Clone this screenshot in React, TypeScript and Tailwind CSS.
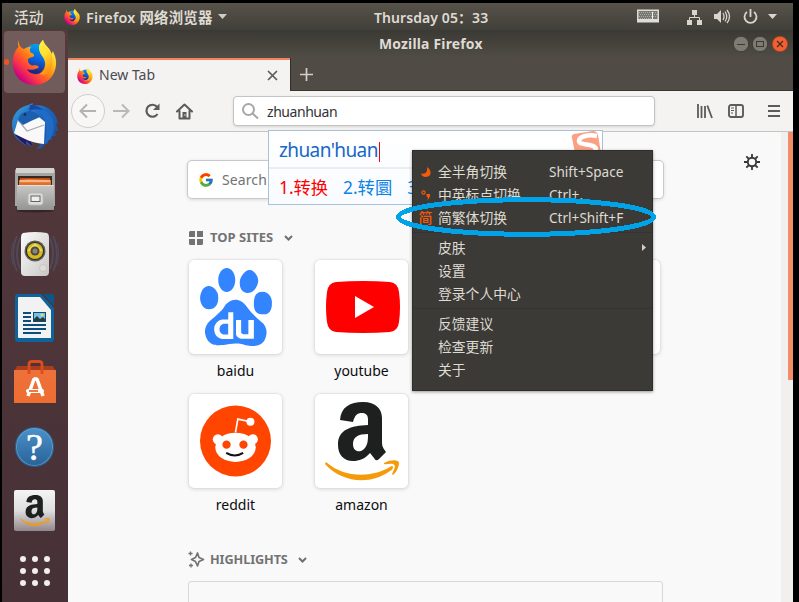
import React from "react";
import { SiBaidu } from "react-icons/si";
import { FcGoogle } from "react-icons/fc";

const UI = "font-['Noto_Sans','Noto_Sans_CJK_SC',sans-serif]";

function FirefoxLogo({ size, id }: { size: number; id: string }) {
  return (
    <svg width={size} height={size} viewBox="0 0 44 45" className="block shrink-0">
      <defs>
        <linearGradient id={id + "f"} x1="0.85" y1="0.1" x2="0.15" y2="0.85">
          <stop offset="0" stopColor="#fff44f" />
          <stop offset="0.28" stopColor="#ffbd1f" />
          <stop offset="0.52" stopColor="#ff7a16" />
          <stop offset="0.76" stopColor="#ff3647" />
          <stop offset="1" stopColor="#c60084" />
        </linearGradient>
        <linearGradient id={id + "b"} x1="0.7" y1="0" x2="0.4" y2="1">
          <stop offset="0" stopColor="#00a8f5" />
          <stop offset="0.5" stopColor="#0a65e0" />
          <stop offset="1" stopColor="#261b70" />
        </linearGradient>
        <linearGradient id={id + "y"} x1="0" y1="0" x2="0.4" y2="1">
          <stop offset="0" stopColor="#fff44f" />
          <stop offset="0.5" stopColor="#ffe22e" />
          <stop offset="1" stopColor="#ff9712" />
        </linearGradient>
      </defs>
      <circle cx="23.5" cy="19" r="15" fill={`url(#${id}b)`} />
      <path
        d="M6 0C5 3 5.400 5 6 7C2 11 0 17 0.300 24C1 37 10 45 22 45C35 45 43.500 35 43.600 23C43.700 17 41 13 40.500 11L39 14C38 8 32 6 30.500 0C25 5 26 10 29 15C34 21 34 29 27 33.500C22 36 16 33 14.500 29C19 31 22 29 26 28C26.500 25 23 25 20 25.500C17 25 15 22 15.500 19C17 17 20 18 21.500 16C22 14 20 13 18 12.500C17 10 17 8 19 6.500C15 7 13 8 11.500 9C8 8 6 4 6 0Z"
        fill={`url(#${id}f)`}
      />
      <path
        d="M30.500 0C25 5 26 10 29 15C35 22 35 31 27 34C37 38 42 26 39 14C38 8 32 6 30.500 0Z"
        fill={`url(#${id}y)`}
        opacity="0.85"
      />
    </svg>
  );
}

function ThunderbirdLogo() {
  return (
    <svg width="48" height="48" viewBox="0 0 48 48">
      <defs>
        <linearGradient id="tb" x1="0" y1="0" x2="1" y2="1">
          <stop offset="0" stopColor="#3aa4df" />
          <stop offset="0.45" stopColor="#1c66bd" />
          <stop offset="1" stopColor="#164e9c" />
        </linearGradient>
      </defs>
      <path d="M1 23C1 11 9 5 17 3L22 1L21 4C33 1 45 8 47 22L45 21L47 29L44 29L45 34L41 34L41 38L37 38L37 42L33 42L31 46L25 47C30 43 31 40 31 38L11 34L23 42L19 41L21 45L15 41L15 44L6 37C3 33 1 29 1 23Z" fill="url(#tb)" />
      <path d="M4 33L10 39L15 43L15 39L21 44L20 39L11 33Z" fill="#2b175f" />
      <path d="M8 17C9 8 17 6 23 8C31 10 34 17 35 24C36 31 35 37 33 43C45 34 46 19 36 10C26 2 10 5 8 17Z" fill="#206bc6" />
      <path d="M3 31L7 18L17 13L28 15L34 20L33 42C22 41 12 37 3 31Z" fill="#f9f9fa" />
      <path d="M7 18L16 29L33 23" fill="none" stroke="#a9a9af" strokeWidth="1.200" />
      <path d="M7 18C9 11 14 9 20 9C24 10 27 12 29 15L20 19L12 23Z" fill="#1d5fae" />
      <circle cx="14" cy="12.500" r="1.400" fill="#12345d" />
      <path d="M19 3C25 3 29 5 32 8C26 7 22 7 18 9" fill="#1748a5" />
    </svg>
  );
}

function FilesLogo() {
  return (
    <svg width="42" height="46" viewBox="0 0 42 46">
      <defs>
        <linearGradient id="fl" x1="0" y1="0" x2="0" y2="1">
          <stop offset="0" stopColor="#c7c7c5" /><stop offset="1" stopColor="#949492" />
        </linearGradient>
      </defs>
      <ellipse cx="21" cy="44" rx="19" ry="1.500" fill="#0005" />
      <path d="M2 2Q2 1 3 1H39Q40 1 41 3V39H1V3Z" fill="#a5a5a2" />
      <path d="M2 1H40L40 6H2Z" fill="#d2d2d0" />
      <path d="M4 9H38V20H4Z" fill="#342a24" />
      <path d="M6 11H36V19H6Z" fill="#c44b12" />
      <path d="M5 13L15 12L37 13V19H5Z" fill="#ed7a2f" />
      <path d="M6 14H36" stroke="#fff1e2" />
      <path d="M5 17H37" stroke="#c65b23" strokeWidth="0.700" />
      <rect x="3" y="18" width="37" height="25" rx="1" fill="url(#fl)" />
      <path d="M3.500 18.500H39.500" stroke="#e0e0df" />
      <rect x="14" y="26" width="15" height="12" rx="2.500" fill="#ddd" stroke="#b8b8b6" />
      <rect x="17" y="29" width="9" height="5.500" fill="#eee" stroke="#636361" />
    </svg>
  );
}

function RhythmboxLogo() {
  return (
    <svg width="52" height="50" viewBox="0 0 52 50">
      <defs>
        <linearGradient id="rb" x1="0" y1="0" x2="1" y2="1">
          <stop offset="0" stopColor="#fafafa" /><stop offset="1" stopColor="#c9c8c5" />
        </linearGradient>
      </defs>
      <g fill="none" stroke="#4d6a90" strokeWidth="1.800" opacity="0.4">
        <path d="M8 7C3 18 3 32 8 42M11 9C7 19 7 30 11 40M44 7C49 18 49 32 44 42M41 9C45 19 45 30 41 40" />
        <path d="M4 14C2 21 2 29 4 36M48 14C50 21 50 29 48 36" strokeWidth="1" />
      </g>
      <path d="M14 4Q26 2 38 4Q40 5 40 8V43Q40 47 36 47H16Q12 47 12 43V8Q12 5 14 4Z" fill="url(#rb)" />
      <circle cx="26" cy="22" r="10.500" fill="#5d5d5a" />
      <circle cx="26" cy="22" r="9" fill="#292925" />
      <circle cx="26" cy="22" r="8" fill="#d8ba1d" />
      <path d="M18 22L34 22L26 14Z" fill="#f1dc56" />
      <circle cx="26" cy="22" r="4.500" fill="#4b4a45" />
      <circle cx="26" cy="22" r="2.500" fill="#88877e" />
      <circle cx="34" cy="39" r="3.500" fill="#deddda" stroke="#c7c6c2" />
    </svg>
  );
}

function WriterLogo() {
  return (
    <svg width="40" height="48" viewBox="0 0 40 48">
      <path d="M3 0H26L39 14V45Q39 48 36 48H3Q0 48 0 45V3Q0 0 3 0Z" fill="#0e639c" />
      <path d="M28 0H38Q39 0 39 1V12Z" fill="#0d5688" />
      <path d="M4 3H25L36 16V44H4Q3 44 3 43V4Q3 3 4 3Z" fill="#f2f2f2" />
      <path d="M8 19H16M8 23H16M8 27H16M8 31H31M8 35H31M8 39H26" stroke="#0c4f7d" strokeWidth="2" />
      <rect x="18" y="18" width="13" height="10" fill="#124a70" />
      <rect x="19" y="19" width="11" height="8" fill="#72c3e8" />
      <path d="M19 27V25L22 22L25 25L28 23L30 25V27Z" fill="#293b37" />
      <circle cx="27" cy="21" r="1.300" fill="#f5e353" />
    </svg>
  );
}

function SoftwareLogo() {
  return (
    <svg width="42" height="44" viewBox="0 0 42 44">
      <defs><linearGradient id="sw" x1="0" y1="0" x2="0" y2="1"><stop offset="0" stopColor="#ed713a" /><stop offset="1" stopColor="#ef6d31" /></linearGradient></defs>
      <path d="M3 6H39L41 10H1Z" fill="#a83e20" />
      <path d="M0 10H42V43H0Z" fill="url(#sw)" />
      <path d="M15 14V4Q15 1.500 18 1.500H25Q28 1.500 28 4V14" fill="none" stroke="#dd4c1a" strokeWidth="2.800" />
      <path d="M14 36L20 19H23L29 36" fill="none" stroke="#fff" strokeWidth="3.500" strokeLinejoin="bevel" />
      <path d="M14 31H28" stroke="#fff" strokeWidth="4" strokeLinecap="round" />
      <path d="M15 31H24" stroke="#ef6b2d" strokeWidth="1.800" />
    </svg>
  );
}

function AmazonLogo({ width, height }: { width: number; height: number }) {
  return (
    <svg width={width} height={height} viewBox="0 0 74 79">
      <path d="M15 18C16 5 25 0 38 0C51 0 57 7 57 16V41C57 45 59 47 61 50L54 57Q51 60 49 56L45 51C40 57 34 59 28 59C19 59 13 53 13 43C13 27 26 24 43 23V18C43 13 41 11 37 11C32 11 30 13 28 20ZM43 32C33 32 28 35 28 42C28 50 35 51 39 47C43 43 43 38 43 32Z" fill="#1e1f1f" />
      <path d="M1 60C19 76 46 76 65 65C69 62 69 67 65 69C44 84 16 80 0 62Z" fill="#f59b0b" />
      <path d="M59 61C67 57 74 58 74 61C74 65 71 71 68 73L67 72C70 66 71 63 68 62C65 61 62 63 59 62Z" fill="#f59b0b" />
    </svg>
  );
}

function RedditLogo() {
  return (
    <svg width="71" height="72" viewBox="60 60 214 216">
      <circle cx="167" cy="168" r="107" fill="#ff4500" />
      <path d="M167 142L174 102L212 110" fill="none" stroke="#fff" strokeWidth="5" />
      <circle cx="212" cy="110" r="12" fill="#fff" />
      <circle cx="114" cy="163" r="15.500" fill="#fff" />
      <circle cx="219" cy="163" r="15.500" fill="#fff" />
      <ellipse cx="167" cy="187" rx="61" ry="44" fill="#fff" />
      <circle cx="140" cy="179" r="12.500" fill="#ff4500" />
      <circle cx="191" cy="179" r="12.500" fill="#ff4500" />
      <path d="M139 204Q165 220 190 204" fill="none" stroke="#111" strokeWidth="6" />
    </svg>
  );
}

function HelpLogo() {
  return (
    <span className="mt-[2px] flex h-[40px] w-[39px] items-center justify-center rounded-full border border-[#286292] bg-gradient-to-b from-[#4c91c9] to-[#276398] shadow-[inset_0_0_0_1px_#70a8d5aa]">
      <span className="font-['Liberation_Serif',serif] text-[38px] leading-[44px] text-white [-webkit-text-stroke:0.500px_white]">?</span>
    </span>
  );
}

function Dock() {
  const items = [
    <FirefoxLogo size={45} id="dock" />,
    <ThunderbirdLogo />,
    <FilesLogo />,
    <RhythmboxLogo />,
    <WriterLogo />,
    <SoftwareLogo />,
    <HelpLogo />,
    <span className="flex h-[41px] w-[41px] items-center justify-center rounded-[2px] bg-gradient-to-b from-[#f5f5f5] via-[#dededf] to-[#92878c]"><AmazonLogo width={36} height={31} /></span>,
    <svg width="30" height="31" viewBox="0 0 30 31" className="-translate-y-[3px]">
      {[3, 15, 27].map((y) => [3, 15, 27].map((x) => <circle key={x + "-" + y} cx={x} cy={y} r="3" fill="#f0eeee" />))}
    </svg>,
  ];
  return (
    <nav className="flex w-[66px] shrink-0 flex-col gap-[2px] bg-gradient-to-b from-[#55393b] to-[#463137] pt-px">
      {items.map((icon, i) => (
        <div key={i} className={"relative ml-[2px] flex h-[62px] w-[61px] shrink-0 items-center justify-center rounded-[4px] " + (i === 0 ? "bg-[#715b5b]" : "")}>
          {i === 0 && <i className="absolute left-0 top-[28px] h-[6px] w-[5px] rounded-full bg-[#ec5524]" />}
          {icon}
        </div>
      ))}
    </nav>
  );
}

function TopBar() {
  return (
    <header className="flex h-[27px] shrink-0 items-center bg-gradient-to-b from-[#57534a] to-[#413f3a] text-[#dfdbd2]">
      <span className="ml-[12px] mt-[2px] w-[50px] text-[14.700px] font-medium">活动</span>
      <span className="w-[22px]"><FirefoxLogo size={16} id="top" /></span>
      <span className="mt-[2px] w-[132px] whitespace-nowrap text-[14.400px] font-semibold tracking-[0.200px]">Firefox 网络浏览器</span>
      <svg width="9" height="5"><path d="M0 0H9L4.500 5Z" fill="#cfccc5" /></svg>
      <span className="ml-[147px] mt-[2px] w-[263px] whitespace-nowrap text-[14px] font-semibold tracking-[0.080px]">Thursday 05：33</span>
      <svg width="22" height="14" viewBox="0 0 22 14" className="-mt-px">
        <rect width="22" height="13" y="0.500" fill="#deddd8" /><rect x="1.500" y="2" width="19" height="8" fill="#777772" />
        <path d="M2 3.500H20M3 5.500H20M2 7.500H20M3 9.500H14" stroke="#b9b9b4" strokeWidth="0.800" strokeDasharray="1 1" /><path d="M15.500 3V10" stroke="#f4f4ef" />
      </svg>
      <svg className="ml-[28px]" width="15" height="16"><path d="M5 1H10V6H5ZM0 11H5V16H0ZM10 11H15V16H10Z" fill="#d8d5ce" /><path d="M7.500 6V9M2.500 11V8.500H12.500V11" fill="none" stroke="#d8d5ce" /></svg>
      <svg className="ml-[12px]" width="17" height="15" viewBox="0 0 17 15"><path d="M0 5H3L7 1V14L3 10H0Z" fill="#d8d5ce" /><path d="M9 4Q11 7.500 9 11M11 2.500Q14.500 7.500 11 12.500M13 1Q18 7.500 13 14" fill="none" stroke="#d8d5ce" strokeWidth="1.300" /></svg>
      <svg className="ml-[12px]" width="15" height="16" viewBox="0 0 15 16"><path d="M4 3A6 6 0 1 0 11 3M7.500 0V8" fill="none" stroke="#d8d5ce" strokeWidth="1.800" /></svg>
      <svg className="ml-[10px]" width="9" height="5"><path d="M0 0H9L4.500 5Z" fill="#d8d5ce" /></svg>
    </header>
  );
}

function WindowControl({ kind }: { kind: string }) {
  const close = kind === "close";
  return (
    <svg width="18" height="18" viewBox="0 0 18 18">
      <circle cx="9" cy="9" r="7.700" fill={close ? "#ed6132" : "#7d7b72"} stroke={close ? "#9e3b20" : "#373530"} strokeWidth="0.800" />
      {kind === "min" && <path d="M5 9.500H13" stroke="#3b3934" />}
      {kind === "max" && <rect x="5.500" y="6.500" width="7" height="5" fill="none" stroke="#3b3934" />}
      {close && <path d="M6 6L12 12M12 6L6 12" stroke="#4d271c" strokeWidth="1.200" />}
    </svg>
  );
}

function WindowHeader() {
  return (
    <div className="h-[61px] shrink-0 bg-gradient-to-b from-[#3b3934] via-[#504c45] via-45% to-[#504c45]">
      <div className="flex h-[28px] items-center">
        <span className="ml-[311px] w-[353px] text-[13.900px] font-bold leading-none tracking-[0.200px] text-[#dfdbd2]">Mozilla Firefox</span>
        <WindowControl kind="min" />
        <span className="ml-px flex gap-[2px]"><WindowControl kind="max" /><WindowControl kind="close" /></span>
      </div>
      <div className="flex h-[33px] border-b border-[#393630]">
        <div className="mb-[-1px] flex w-[222px] items-center border-t-2 border-[#f0845c] bg-[#f4f3f2] pl-[9px]">
          <FirefoxLogo size={16} id="tab" />
          <span className="ml-[6px] mt-[-2px] w-[168px] text-[14px] text-[#4a4a4f]">New Tab</span>
          <svg width="11" height="11"><path d="M1 1L10 10M10 1L1 10" stroke="#5b5b5b" strokeWidth="1.700" /></svg>
        </div>
        <div className="flex items-center border-l border-[#302e29] pl-[9px]"><svg width="13" height="13"><path d="M0 6.500H13M6.500 0V13" stroke="#d4d0c7" strokeWidth="1.700" /></svg></div>
      </div>
    </div>
  );
}

function Toolbar() {
  return (
    <div className="flex h-[41px] shrink-0 items-center border-b border-[#c5c4c3] bg-[#f4f3f2]">
      <span className="ml-[3px] flex h-[34px] w-[34px] items-center justify-center rounded-full border border-[#cfcecd] bg-[#f8f7f6]">
        <svg width="18" height="16"><path d="M17 8H2M8 1.500L1.500 8L8 14.500" fill="none" stroke="#b4b3b2" strokeWidth="2" /></svg>
      </span>
      <svg className="ml-[8px]" width="17" height="16"><path d="M0 8H15M9 1.500L15.500 8L9 14.500" fill="none" stroke="#b9b8b7" strokeWidth="2" /></svg>
      <svg className="ml-[14px]" width="18" height="16" viewBox="0 0 18 16"><path d="M13 3.800A6 6 0 1 0 13.500 11" fill="none" stroke="#5b5b5b" strokeWidth="2.200" /><path d="M15.500 0.500V7H9Z" fill="#5b5b5b" /></svg>
      <svg className="ml-[14px]" width="17" height="17" viewBox="0 0 17 17"><path d="M1 8.500L8.500 1.500L16 8.500M3.500 8V15.500H13.500V8" fill="none" stroke="#5b5b5b" strokeWidth="2" strokeLinejoin="round" strokeLinecap="round" /><path d="M6.500 9H10.500V15H6.500Z" fill="#5b5b5b" /><circle cx="9" cy="12" r="0.700" fill="white" /></svg>
      <div className="ml-[40px] flex h-[30px] w-[422px] items-center rounded-[4px] border border-[#c5c4c2] bg-white pl-[8px] shadow-sm">
        <svg width="17" height="16" viewBox="0 0 17 16"><circle cx="6.500" cy="6.500" r="5.500" fill="none" stroke="#a7a7a7" strokeWidth="2" /><path d="M10.500 10.500L16 15.500" stroke="#a7a7a7" strokeWidth="2" /></svg>
        <span className="ml-[8px] text-[14px] tracking-[-0.450px] text-[#333]">zhuanhuan</span>
      </div>
      <svg className="ml-[42px]" width="16" height="15" viewBox="0 0 16 15"><path d="M1 0V14M4.500 2V14M8 2V14" stroke="#5b5b5b" strokeWidth="1.800" /><path d="M10.300 1.500L15 14" stroke="#5b5b5b" strokeWidth="1.800" /></svg>
      <svg className="ml-[15px]" width="16" height="14" viewBox="0 0 16 14"><rect x="1" y="1" width="14" height="12" rx="2" fill="none" stroke="#5b5b5b" strokeWidth="1.900" /><path d="M8 1V13" stroke="#5b5b5b" strokeWidth="1.500" /><path d="M3 4H6M3 6.500H6M3 9H5" stroke="#5b5b5b" /></svg>
      <svg className="ml-[24px]" width="12" height="12"><path d="M0 1H12M0 6H12M0 11H12" stroke="#5b5b5b" strokeWidth="2" /></svg>
    </div>
  );
}

function SiteTile({ label, children }: { label: string; children?: React.ReactNode }) {
  return (
    <div className="flex flex-col items-center">
      <div className="flex h-[94px] w-[93px] items-center justify-center rounded-[5px] bg-white shadow-[0_0_0_0.500px_#dcdcde,0_1px_4px_#0c0c0d28]">{children}</div>
      <span className="mt-[7px] h-[19px] text-[14px] leading-5 text-[#0c0c0d]">{label}</span>
    </div>
  );
}

function Chevron() {
  return <svg width="9" height="6" className="-mt-px"><path d="M1 1L4.500 4.500L8 1" fill="none" stroke="#6f6f70" strokeWidth="2" /></svg>;
}

function NewTabPage() {
  return (
    <main className="flex min-h-0 flex-1 overflow-hidden bg-[#f9f9fa]">
      <section className="ml-[120px] mt-[29px] w-[476px] shrink-0">
        <div className="flex h-[37px] w-[475px] items-center rounded-[4px] bg-white pl-[10px] shadow-[0_0_0_1px_#c9c9cb,0_1px_4px_#0c0c0d33]">
          <FcGoogle size={16} />
          <span className="ml-[8px] text-[14px] tracking-[0.100px] text-[#737373]">Search</span>
        </div>
        <div className="mt-[30px] flex h-[20px] items-center text-[13px] font-bold text-[#737373]">
          <svg width="15" height="14" viewBox="0 0 15 14" className="-mt-px ml-px"><path d="M1 0H6V6H0V1ZM9 0H14V6H8V0ZM0 8H6V14H1L0 13ZM8 8H14V13L13 14H8Z" fill="#737373" /></svg>
          <span className="ml-[6px] w-[74px] whitespace-nowrap">TOP SITES</span><Chevron />
        </div>
        <div className="mt-[12px] grid grid-cols-[repeat(4,94px)] gap-x-[32px] gap-y-[14px] pl-[0.500px]">
          <SiteTile label="baidu"><SiBaidu size={78} className="text-[#3385ff]" /></SiteTile>
          <SiteTile label="youtube">
            <svg width="74" height="52" viewBox="0 0 74 52" className="translate-x-px"><path d="M10 1Q37-1 64 1Q72 2 73 11Q75 26 73 41Q72 50 64 51Q37 53 10 51Q2 50 1 41Q-1 26 1 11Q2 2 10 1Z" fill="#f00" /><path d="M29 15V37L48 26Z" fill="#fff" /></svg>
          </SiteTile>
          <SiteTile label="" />
          <SiteTile label="" />
          <SiteTile label="reddit"><RedditLogo /></SiteTile>
          <SiteTile label="amazon"><AmazonLogo width={74} height={79} /></SiteTile>
        </div>
        <div className="mt-[36px] flex h-[20px] items-center text-[12.700px] font-bold text-[#737373]">
          <svg width="17" height="17" viewBox="0 0 17 17" className="-mt-[2px]"><path d="M9.500 2L11 6.500L15.500 8.500L11 10.500L9.500 15L7.500 10.500L3.500 8.500L7.500 6.500Z" fill="none" stroke="#737373" strokeWidth="1.700" strokeLinejoin="round" /><path d="M2.500 0.500V4.500M0.500 2.500H4.500M3 12.500V16.500M1 14.500H5" stroke="#737373" strokeWidth="1.300" /></svg>
          <span className="ml-[5px] w-[88px] whitespace-nowrap tracking-[-0.100px]">HIGHLIGHTS</span><Chevron />
        </div>
        <div className="mt-[11px] h-[60px] w-[475px] rounded-[3px] border border-[#d7d7db]" />
      </section>
      <svg className="ml-[80px] mt-[22px] shrink-0" width="16" height="16" viewBox="0 0 16 16"><circle cx="8" cy="8" r="4.200" fill="none" stroke="#38383d" strokeWidth="1.900" /><path d="M8 0V4M8 12V16M0 8H4M12 8H16M2.300 2.300L5 5M11 11L13.700 13.700M2.300 13.700L5 11M11 5L13.700 2.300" stroke="#38383d" strokeWidth="1.800" /></svg>
      <div className="ml-auto flex w-[12px] justify-end bg-[#f1f0ef]"><div className="h-[248px] w-[5px] bg-[#f18e69]" /></div>
    </main>
  );
}

function MenuItem({ text, keys, icon, arrow }: { text: string; keys?: string; icon?: React.ReactNode; arrow?: boolean }) {
  return (
    <div className="flex h-[23px] items-center whitespace-nowrap text-[13.800px] leading-none">
      <span className="flex w-[25px] items-center justify-center text-[#f45a0a]">{icon}</span>
      <span className="w-[111px]">{text}</span>
      <span className="w-[80px] text-[13.600px]">{keys}</span>
      {arrow && <svg className="ml-[13px]" width="4" height="7"><path d="M0 0L4 3.500L0 7Z" fill="#d0cdc6" /></svg>}
    </div>
  );
}

function InputPopup() {
  return (
    <div className="absolute left-[268px] top-[130px] h-[75px] w-[335px] overflow-hidden border border-[#a9c1d7] bg-gradient-to-b from-white to-[#f8fbff]">
      <div className="flex h-[38px] items-center border-b-2 border-[#ececef] pl-[10px] text-[19px] text-[#1767c8]">
        <span className="mt-[2px] tracking-[-0.600px]">zhuan'huan</span><i className="ml-px mt-[5px] h-[20px] w-px bg-[#f00]" />
        <svg className="ml-auto self-start" width="31" height="34" viewBox="0 0 31 34"><path d="M3 3Q0 4 1 7L5 27Q6 30 10 30L26 27Q30 26 30 22L27 4Q26 0 22 0Z" fill="#faa184" /><path d="M26 5C16 3 8 6 8 10C8 15 24 12 25 18C25 22 16 23 9 21" fill="none" stroke="white" strokeWidth="4.500" /></svg>
      </div>
      <div className="flex h-[36px] items-center gap-[15px] pl-[10px] pt-px text-[17.300px] text-[#0a82e6]"><span className="text-[#f00]">1.转换</span><span>2.转圜</span><span>3.专</span></div>
    </div>
  );
}

function ContextMenu() {
  return (
    <div className="absolute left-[412px] top-[150px] h-[241px] w-[241px] border border-[#302e2b] bg-[#3c3a36] pt-[9px] text-[#dedbd3] shadow-[0_1px_3px_#0006]">
      <MenuItem text="全半角切换" keys="Shift+Space" icon={<svg width="10" height="10"><path d="M6 0C11 3 11 10 5 10Q1 10 0 6.500Q7 8 6 0Z" fill="currentColor" /></svg>} />
      <MenuItem text="中英标点切换" keys="Ctrl+." icon={<svg width="10" height="10"><circle cx="2.500" cy="2.500" r="1.600" fill="none" stroke="currentColor" strokeWidth="1.200" /><path d="M5.500 4H9Q9.500 8 6 10Q8 7 5.500 6.500Z" fill="currentColor" /></svg>} />
      <MenuItem text="简繁体切换" keys="Ctrl+Shift+F" icon={<b className="text-[14px] font-medium">简</b>} />
      <hr className="my-[3px] border-[#363430]" />
      <MenuItem text="皮肤" arrow />
      <MenuItem text="设置" />
      <MenuItem text="登录个人中心" />
      <hr className="my-[3px] border-[#363430]" />
      <MenuItem text="反馈建议" />
      <MenuItem text="检查更新" />
      <MenuItem text="关于" />
    </div>
  );
}

export default function App() {
  return (
    <div className={"relative flex h-[602px] w-[799px] flex-col overflow-hidden bg-black pl-[2px] pr-[6px] pt-[3px] " + UI}>
      <TopBar />
      <div className="flex min-h-0 flex-1">
        <Dock />
        <div className="flex min-w-0 flex-1 flex-col"><WindowHeader /><Toolbar /><NewTabPage /></div>
      </div>
      <InputPopup />
      <ContextMenu />
      <svg className="absolute left-[394px] top-[195px]" width="264" height="45" shapeRendering="crispEdges"><ellipse cx="132" cy="22" rx="127.500" ry="17.300" fill="none" stroke="#00a2e8" strokeWidth="5" /></svg>
    </div>
  );
}
